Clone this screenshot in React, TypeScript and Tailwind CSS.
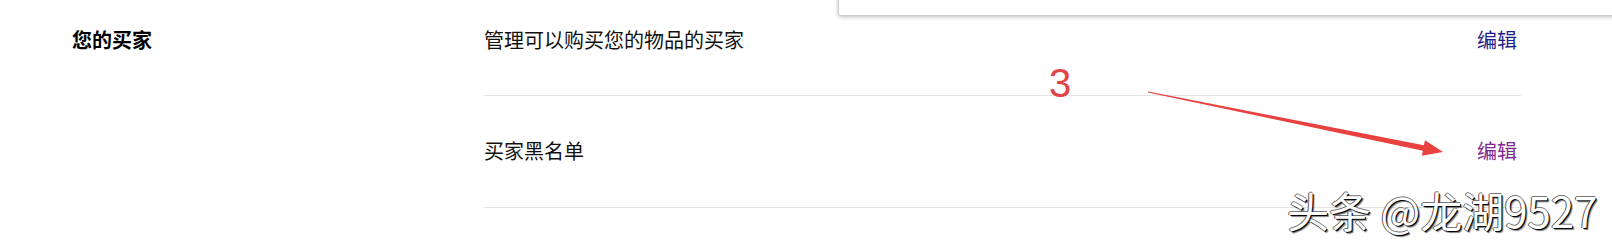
import React from 'react';

const font = { fontFamily: '"Noto Sans CJK SC", "Noto Sans", sans-serif' };

export default function App() {
  return (
    <div className="relative w-[1612px] h-[242px] overflow-hidden bg-white text-[#111]" style={font}>
      {/* settings section */}
      <div className="flex">
        <div className="w-[484px] pl-[72px] pt-[26px]">
          <h2 className="text-[20px] leading-[28px] font-bold text-black">您的买家</h2>
        </div>
        <div className="w-[1037px]">
          <div className="flex items-center justify-between pt-[26px] pb-[41px] pr-[4px] border-b border-[#e4e4e4]">
            <span className="text-[20px] leading-[28px]">管理可以购买您的物品的买家</span>
            <a className="text-[20px] leading-[28px] text-[#1f1f8c] cursor-pointer">编辑</a>
          </div>
          <div className="flex items-center justify-between pt-[41px] pb-[42px] pr-[4px] border-b border-[#e4e4e4]">
            <span className="text-[20px] leading-[28px]">买家黑名单</span>
            <a className="text-[20px] leading-[28px] text-[#7e2a8e] cursor-pointer">编辑</a>
          </div>
        </div>
      </div>

      {/* popup edge at top */}
      <div className="absolute left-[838px] top-[-30px] right-[-20px] h-[46px] bg-white border border-[#cfcfcf] rounded-[3px] shadow-[0_1px_4px_rgba(0,0,0,0.25)]" />

      {/* annotation */}
      <span className="absolute left-[1049px] top-[61px] text-[40px] leading-[44px] text-[#e04444]" style={{ fontFamily: '"Liberation Sans", sans-serif' }}>
        3
      </span>
      <svg className="absolute left-0 top-0" width="1612" height="242" viewBox="0 0 1612 242">
        <polygon
          points="1148.1,91.5 1423.9,145.3 1425,140.2 1443,152 1421.8,155.8 1422.9,150.7 1147.9,92.5"
          fill="#e8413f"
        />
      </svg>

      {/* watermark */}
      <span
        className="absolute left-[1287px] top-[184px] text-[42px] leading-[52px] text-white whitespace-nowrap"
        style={{ textShadow: '1px 1px 0 #000, -1px 0 0 #555, 0 -1px 0 #777, 2px 2px 1px rgba(0,0,0,0.5)' }}
      >
        头条 @龙湖9527
      </span>
    </div>
  );
}
